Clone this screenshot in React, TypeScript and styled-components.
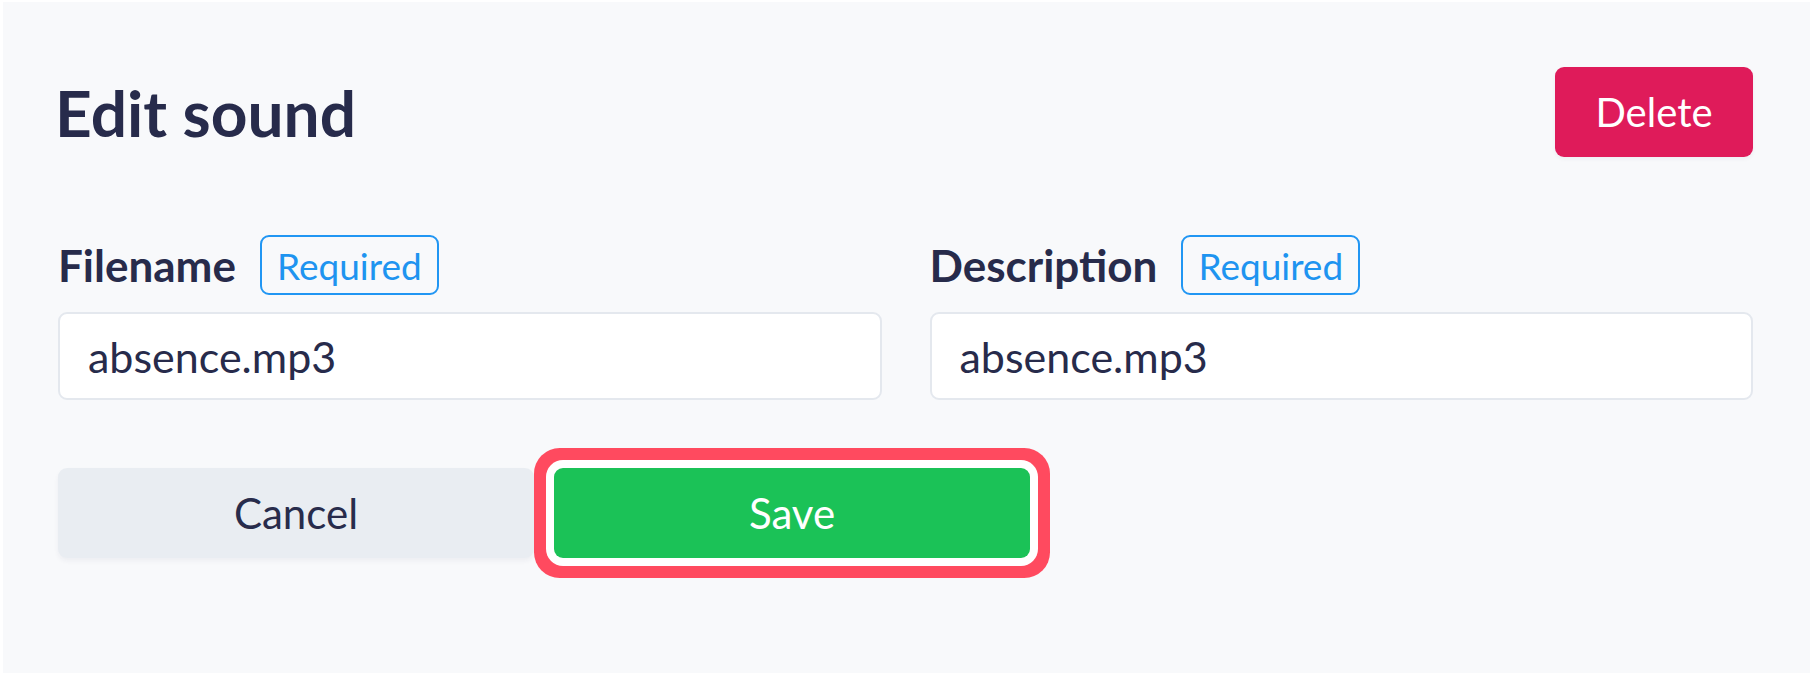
import React from "react";
import styled, { createGlobalStyle } from "styled-components";

const GlobalStyle = createGlobalStyle`
  html, body {
    margin: 0;
    padding: 0;
    background: #ffffff;
  }
  body {
    font-family: Lato, "Noto Sans", sans-serif;
    color: #272b4b;
  }
`;

const fields = [
  { label: "Filename", value: "absence.mp3" },
  { label: "Description", value: "absence.mp3" },
];

const App: React.FC = () => {
  return (
    <>
      <GlobalStyle />
      <Page>
        <Header>
          <Title>Edit sound</Title>
          <DeleteButton>Delete</DeleteButton>
        </Header>

        <FieldGrid>
          {fields.map((f) => (
            <Field key={f.label}>
              <LabelRow>
                <Label>{f.label}</Label>
                <Badge>Required</Badge>
              </LabelRow>
              <Input defaultValue={f.value} />
            </Field>
          ))}
        </FieldGrid>

        <ButtonRow>
          <CancelButton>Cancel</CancelButton>
          <SaveButton $highlighted>Save</SaveButton>
        </ButtonRow>
      </Page>
    </>
  );
};

export default App;

const Page = styled.div`
  margin: 2px 0 0 3px;
  min-height: 671px;
  box-sizing: border-box;
  background: #f8f9fb;
  padding: 65px 57px 0 55px;
`;

const Header = styled.div`
  display: flex;
  flex-direction: row;
  justify-content: space-between;
  align-items: center;
  height: 90px;
`;

const Title = styled.h1`
  margin: 0 0 0 -3px;
  font-size: 64px;
  font-weight: 700;
  color: #272b4b;
`;

const DeleteButton = styled.button`
  width: 198px;
  height: 90px;
  border: none;
  border-radius: 9px;
  background: #df1b5a;
  color: #ffffff;
  font-family: inherit;
  font-size: 40px;
  box-shadow: 0 2px 4px rgba(30, 40, 70, 0.05);
  cursor: pointer;
`;

const FieldGrid = styled.div`
  display: grid;
  grid-template-columns: 1fr 1fr;
  column-gap: 48px;
  margin-top: 78px;
`;

const Field = styled.div`
  display: flex;
  flex-direction: column;
`;

const LabelRow = styled.div`
  display: flex;
  flex-direction: row;
  align-items: center;
  gap: 24px;
  height: 60px;
`;

const Label = styled.span`
  font-size: 44px;
  font-weight: 700;
  color: #272b4b;
`;

const Badge = styled.span`
  display: flex;
  align-items: center;
  height: 60px;
  box-sizing: border-box;
  padding: 0 15px;
  border: 2px solid #2196f3;
  border-radius: 9px;
  color: #1e94f0;
  font-size: 37px;
`;

const Input = styled.input`
  margin-top: 17px;
  height: 88px;
  box-sizing: border-box;
  border: 2px solid #e4e8ee;
  border-radius: 9px;
  background: #ffffff;
  padding: 0 28px;
  font-family: inherit;
  font-size: 43px;
  color: #272b4b;
  outline: none;
`;

const ButtonRow = styled.div`
  display: flex;
  flex-direction: row;
  align-items: center;
  gap: 20px;
  margin-top: 68px;
`;

const BaseButton = styled.button`
  width: 476px;
  height: 90px;
  border: none;
  border-radius: 9px;
  font-family: inherit;
  font-size: 42px;
  cursor: pointer;
`;

const CancelButton = styled(BaseButton)`
  background: #e9edf2;
  color: #282c4c;
  box-shadow: 0 3px 5px rgba(30, 40, 70, 0.05);
`;

const SaveButton = styled(BaseButton)<{ $highlighted?: boolean }>`
  background: #1bc257;
  color: #ffffff;
  box-shadow: ${(p) =>
    p.$highlighted ? "0 0 0 8px #ffffff, 0 0 0 20px #ff4a5f" : "none"};
`;
